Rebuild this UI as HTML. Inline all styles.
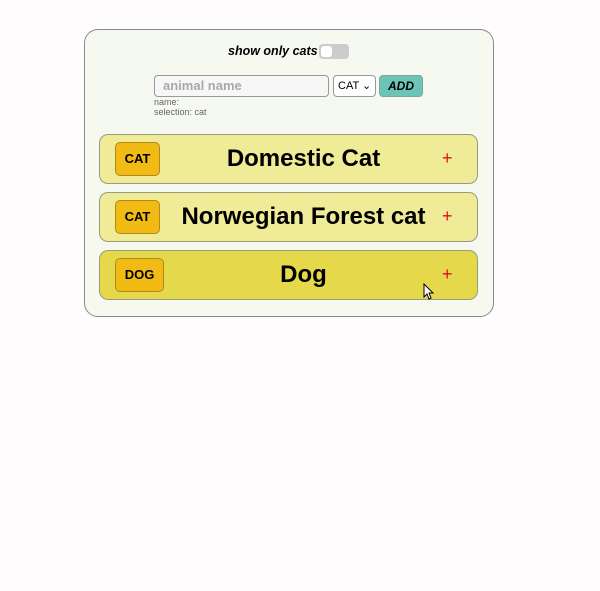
<!DOCTYPE html><html><head><style>
body{margin:0;width:600px;height:591px;background:#fefcfd;font-family:"Liberation Sans",sans-serif;position:relative;overflow:hidden}
.box{position:absolute;left:84px;top:29px;width:408px;height:286px;border:1px solid #8a8a8a;border-radius:14px;background:#f6f9ef}
.a{position:absolute}
.card{position:absolute;left:99px;width:377px;height:48px;border:1px solid #9a9a80;border-radius:9px;background:#efeb96}
.badge{position:absolute;left:15px;top:7px;height:32px;border:1px solid #b08a20;border-radius:5px;background:#f1bb14;font-weight:bold;font-size:13px;line-height:32px;text-align:center}
.t{position:absolute;left:30px;right:0;top:0;line-height:48px;text-align:center;font-weight:bold;font-size:24px;color:#000}
.plus{position:absolute;left:342px;top:13px;color:#e0101a;font-size:18px;line-height:20px}
</style></head><body>
<div class="box"></div>
<div class="a" style="left:228px;top:44px;font-size:12.5px;font-weight:bold;font-style:italic;width:88px;white-space:nowrap">show only cats</div>
<div class="a" style="left:319px;top:44px;width:30px;height:15px;border-radius:4px;background:#ccc"><div style="position:absolute;left:2px;top:2px;width:11px;height:11px;background:#fff;border-radius:3px"></div></div>
<div class="a" style="left:154px;top:75px;width:173px;height:20px;border:1px solid #999;border-radius:4px;background:#f7f7f7;font-size:13px;font-weight:bold;color:#a8a8a8;line-height:20px;text-indent:8px">animal name</div>
<div class="a" style="left:333px;top:75px;width:41px;height:20px;border:1px solid #999;border-radius:4px;background:#fff;font-size:11px;line-height:20px;text-indent:4px">CAT &#8964;</div>
<div class="a" style="left:379px;top:75px;width:42px;height:20px;border:1px solid #7a9;border-radius:4px;background:#6cc3b8;font-size:12px;font-weight:bold;font-style:italic;line-height:20px;text-align:center">ADD</div>
<div class="a" style="left:154px;top:97px;font-size:9px;color:#666;line-height:10px">name:<br>selection: cat</div>
<div class="card" style="top:134px"><div class="t">Domestic Cat</div><div class="badge" style="width:43px">CAT</div><div class="plus">+</div></div>
<div class="card" style="top:192px"><div class="t">Norwegian Forest cat</div><div class="badge" style="width:43px">CAT</div><div class="plus">+</div></div>
<div class="card" style="top:250px;background:#e5d94b"><div class="t">Dog</div><div class="badge" style="width:47px">DOG</div><div class="plus">+</div></div>
<svg class="a" style="left:423px;top:283px" width="12" height="17" viewBox="0 0 12 17"><path d="M1 1 L1 14 L4 11 L6 16 L8 15 L6 10 L10 10 Z" fill="#fff" stroke="#000" stroke-width="1"/></svg>
</body></html>
